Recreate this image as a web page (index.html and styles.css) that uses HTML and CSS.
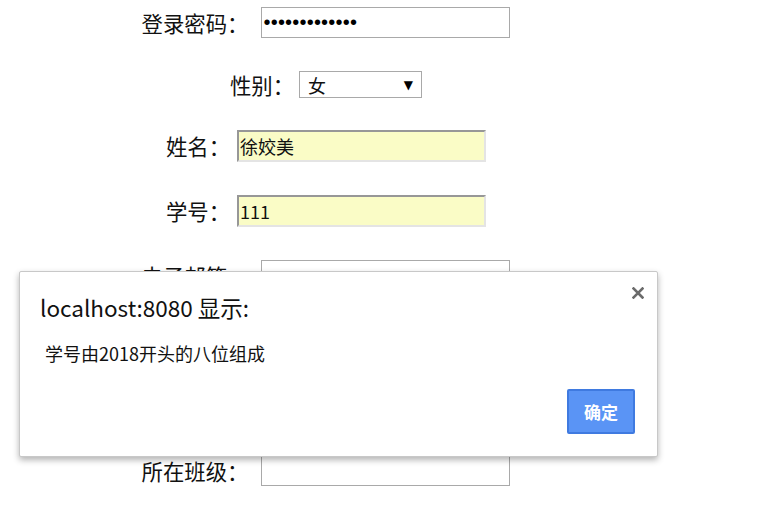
FILE: index.html
```html
<!DOCTYPE html>
<html>
<head>
<meta charset="utf-8">
<link rel="stylesheet" href="styles.css">
</head>
<body>
<form class="form">
  <div class="row r-pw"><label class="lbl">登录密码：</label><input class="field field-pw" type="password" value="1234567890123"></div>
  <div class="row r-sex"><label class="lbl lbl-tight">性别：</label><span class="select"><span class="sel-val">女</span><span class="sel-arrow">▼</span></span></div>
  <div class="row r-name"><label class="lbl lbl-mid">姓名：</label><input class="field field-y" type="text" value="徐姣美"></div>
  <div class="row r-id"><label class="lbl lbl-mid">学号：</label><input class="field field-y" type="text" value="111"></div>
  <div class="row r-mail"><label class="lbl">电子邮箱：</label><input class="field" type="text"></div>
  <div class="row r-hide"><label class="lbl">联系电话：</label><input class="field" type="text"></div>
  <div class="row r-hide"><label class="lbl">所在学院：</label><input class="field" type="text"></div>
  <div class="row r-class"><label class="lbl">所在班级：</label><input class="field" type="text"></div>
</form>

<div class="dialog">
  <div class="dlg-close"><svg width="12" height="12" viewBox="0 0 12 12"><path d="M1.5 1.5 L10.5 10.5 M10.5 1.5 L1.5 10.5" stroke="#6b6b6b" stroke-width="2.6" stroke-linecap="square"/></svg></div>
  <div class="dlg-title">localhost:8080 显示:</div>
  <div class="dlg-msg">学号由2018开头的八位组成</div>
  <div class="dlg-actions"><button class="dlg-btn" type="button">确定</button></div>
</div>
</body>
</html>
```
FILE: styles.css
```css
html, body {
  margin: 0;
  padding: 0;
  background: #fff;
}
body {
  font-family: "Microsoft YaHei", "Noto Sans CJK SC", "Noto Sans", sans-serif;
  color: #111;
  width: 777px;
  height: 514px;
  overflow: hidden;
  position: relative;
}
.form {
  width: 652px;
  padding-top: 7px;
  display: flex;
  flex-direction: column;
  align-items: center;
}
.row {
  display: flex;
  align-items: center;
  box-sizing: border-box;
}
.row.r-pw { height: 31px; margin-bottom: 33px; }
.row.r-sex { height: 27px; margin-bottom: 32px; }
.row.r-name { height: 32px; margin-bottom: 33px; }
.row.r-id { height: 32px; margin-bottom: 33px; }
.row.r-mail { height: 31px; margin-bottom: 33px; }
.row.r-hide { height: 31px; margin-bottom: 34px; }
.row.r-class { height: 31px; margin-top: 1px; }
.lbl {
  font-size: 21.4px;
  line-height: 1;
  margin-right: 13px;
  white-space: nowrap;
}
.lbl-tight { margin-right: 4px; }
.lbl-mid { margin-right: 7px; }
.field {
  width: 249px;
  height: 31px;
  box-sizing: border-box;
  border: 1px solid #a9a9a9;
  background: #fff;
  padding: 0 6px;
  font-size: 14px;
  font-family: "Liberation Sans", sans-serif;
  color: #000;
  outline: none;
}
.field-pw {
  padding: 0 1px;
  font-size: 20px;
  letter-spacing: 0.2px;
}
.field-y {
  height: 32px;
  background: #fafcc6;
  border-top: 2px solid #979797;
  border-left: 2px solid #979797;
  border-right: 2px solid #e4e4e4;
  border-bottom: 2px solid #e4e4e4;
  padding: 0 1px;
  font-size: 18px;
  font-family: "Microsoft YaHei", "Noto Sans CJK SC", sans-serif;
  color: #111;
}
.select {
  width: 123px;
  height: 27px;
  box-sizing: border-box;
  border: 1px solid #a9a9a9;
  display: flex;
  align-items: center;
  justify-content: space-between;
  padding: 0 8px 0 8px;
  margin-left: 1px;
}
.sel-val {
  font-size: 18px;
  line-height: 1;
}
.sel-arrow {
  font-size: 12px;
  line-height: 1;
  color: #000;
  font-family: "DejaVu Sans", sans-serif;
}
.dialog {
  position: absolute;
  left: 19px;
  top: 271px;
  width: 639px;
  height: 186px;
  box-sizing: border-box;
  background: #fff;
  border: 1px solid #c8c8c8;
  border-radius: 2px;
  box-shadow: 0 3px 6px rgba(0,0,0,0.3);
  padding: 20px 20px 0 20px;
  display: flex;
  flex-direction: column;
}
.dlg-close {
  position: absolute;
  right: 13px;
  top: 15px;
  width: 12px;
  height: 12px;
  display: flex;
}
.dlg-title {
  font-size: 22.5px;
  line-height: 30px;
  color: #111;
}
.dlg-msg {
  font-size: 18px;
  line-height: 22px;
  margin-top: 20px;
  padding-left: 5px;
  color: #111;
}
.dlg-actions {
  display: flex;
  justify-content: flex-end;
  margin-top: 25px;
  padding-right: 2px;
}
.dlg-btn {
  width: 68px;
  height: 45px;
  box-sizing: border-box;
  background: #5a94f5;
  border: 2px solid #3f7ae0;
  border-radius: 2px;
  color: #fff;
  font-size: 17px;
  font-weight: bold;
  font-family: "Microsoft YaHei", "Noto Sans CJK SC", sans-serif;
  padding: 0;
}
```
